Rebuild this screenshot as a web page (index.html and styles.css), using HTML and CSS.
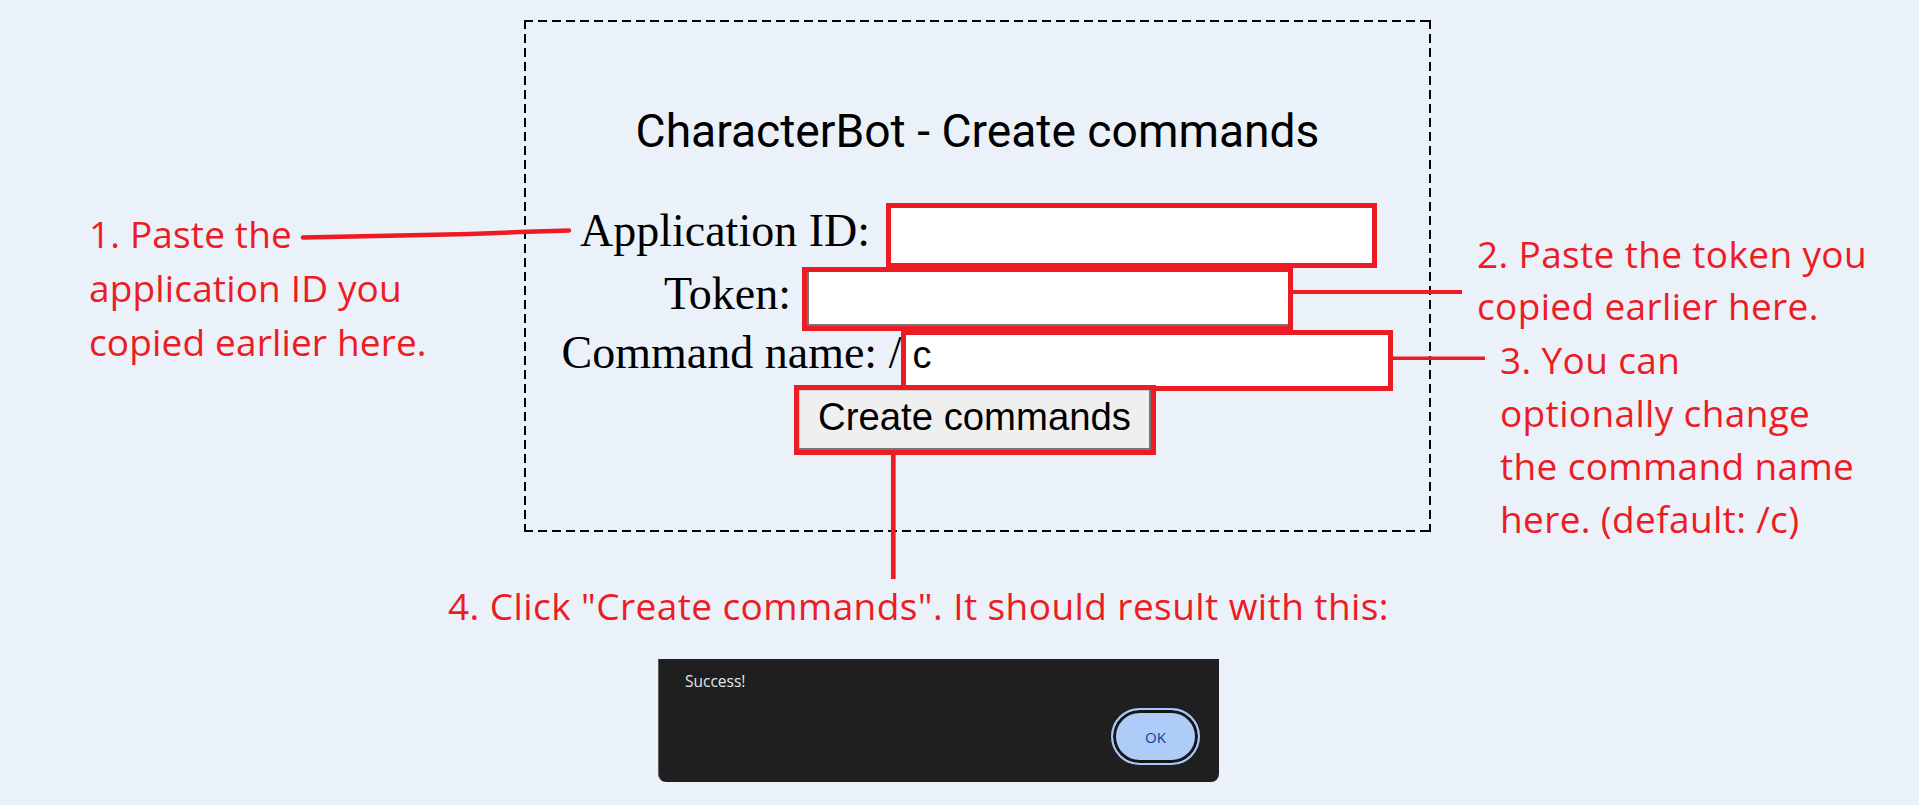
FILE: index.html
```html
<!DOCTYPE html>
<html lang="en">
<head>
<meta charset="utf-8">
<title>CharacterBot - Create commands</title>
<link rel="stylesheet" href="styles.css">
</head>
<body>
<div class="page">
  <div class="panel">
    <h1 class="title">CharacterBot - Create commands</h1>
    <div class="row row-app">
      <span class="label label-app">Application ID:</span>
      <input class="field field-app" type="text">
    </div>
    <div class="row row-token">
      <span class="label label-token">Token:</span>
      <input class="field field-token" type="text">
    </div>
    <div class="row row-cmd">
      <span class="label label-cmd">Command name: /</span>
      <input class="field field-cmd" type="text" value="c">
    </div>
    <div class="row row-btn">
      <button class="btn" type="button">Create commands</button>
    </div>
  </div>

  <div class="dialog">
    <p class="dialog-msg">Success!</p>
    <div class="dialog-actions">
      <button class="ok" type="button">OK</button>
    </div>
  </div>

  <p class="note note-1">1. Paste the<br>application ID you<br>copied earlier here.</p>
  <p class="note note-2">2. Paste the token you<br>copied earlier here.</p>
  <p class="note note-3">3. You can<br>optionally change<br>the command name<br>here. (default: /c)</p>
  <p class="note note-4">4. Click "Create commands". It should result with this:</p>

  <svg class="arrows" width="1919" height="805" viewBox="0 0 1919 805" aria-hidden="true">
    <polyline points="303,237.5 400,235.5 470,234 520,232 569,230.5" fill="none" stroke="#ED1C24" stroke-width="4.5" stroke-linecap="round"/>
    <line x1="1292" y1="292" x2="1462" y2="292" stroke="#ED1C24" stroke-width="4"/>
    <line x1="1390" y1="358.3" x2="1485" y2="358.3" stroke="#ED1C24" stroke-width="3.6"/>
    <line x1="893.3" y1="454" x2="893.3" y2="579" stroke="#ED1C24" stroke-width="4.7"/>
  </svg>
</div>
</body>
</html>
```
FILE: styles.css
```css
html, body {
  margin: 0;
  padding: 0;
}

body {
  background: #EAF1F8;
}

.page {
  position: relative;
  width: 1919px;
  height: 805px;
  padding-top: 20px;
  box-sizing: border-box;
  overflow: hidden;
}

.panel {
  margin-left: 524px;
  width: 907px;
  height: 512px;
  box-sizing: border-box;
  padding: 2px;
  background:
    repeating-linear-gradient(90deg, #000 0 9px, transparent 9px 14px) left top / 100% 2px no-repeat,
    repeating-linear-gradient(90deg, #000 0 9px, transparent 9px 14px) left bottom / 100% 2px no-repeat,
    repeating-linear-gradient(180deg, #000 0 9px, transparent 9px 14px) left top / 2px 100% no-repeat,
    repeating-linear-gradient(180deg, #000 0 9px, transparent 9px 14px) right top / 2px 100% no-repeat;
  display: flex;
  flex-direction: column;
  align-items: center;
}

.title {
  margin: 82px 0 0;
  font: 400 46.2px/54px Roboto, "Liberation Sans", sans-serif;
  color: #000;
}

.row {
  display: flex;
  justify-content: center;
  align-items: flex-start;
  width: 100%;
  box-sizing: border-box;
  padding-left: 2px;
}

.row-app {
  margin-top: 45px;
  height: 64px;
}

.row-token {
  height: 63px;
}

.row-cmd {
  height: 55px;
  padding-left: 0;
}

.row-btn {
  height: 70px;
  padding-left: 0;
}

.label {
  font: 46px/46px "Liberation Serif", "Times New Roman", serif;
  color: #000;
  white-space: nowrap;
}

.label-app {
  margin-top: 5px;
  margin-right: 16px;
}

.label-token {
  margin-top: 4px;
  margin-right: 11px;
}

.label-cmd {
  margin-top: 0;
  margin-right: 0;
}

.field {
  box-sizing: border-box;
  width: 491px;
  margin: 0;
  padding: 0 6px;
  border: 5px solid #ED1C24;
  border-radius: 0;
  background: #fff;
  font: 38px "Liberation Sans", Arial, sans-serif;
  color: #000;
  outline: none;
}

.field-app {
  height: 65px;
}

.field-token {
  height: 64px;
  box-shadow: inset 2px -2px 0 #767676;
}

.field-cmd {
  height: 61px;
  width: 492px;
  padding-bottom: 11px;
}

.btn {
  box-sizing: border-box;
  width: 362px;
  height: 70px;
  margin: 0 6px 0 0;
  padding: 0 0 6px;
  border: 5px solid #ED1C24;
  border-radius: 0;
  background: #EFEFEF;
  box-shadow: inset -2px -2px 0 #767676, inset 1px 1px 0 #cfcfcf;
  font: 38.3px "Liberation Sans", Arial, sans-serif;
  color: #000;
}

.dialog {
  margin: 127px 0 0 658px;
  width: 561px;
  height: 123px;
  box-sizing: border-box;
  padding: 12px 19px 17px 26px;
  background: #1F1F1F;
  border-left: 1px solid #5e5e5e;
  border-radius: 0 0 8px 8px;
  display: flex;
  flex-direction: column;
}

.dialog-msg {
  margin: 0;
  font: 15.5px/21px "Open Sans", "Noto Sans", sans-serif;
  color: #E6E6E6;
}

.dialog-actions {
  margin-top: auto;
  display: flex;
  justify-content: flex-end;
}

.ok {
  box-sizing: border-box;
  width: 89px;
  height: 57px;
  padding: 0;
  border: 2px solid #A8C7FA;
  border-radius: 29px;
  background: #AFCBF7;
  box-shadow: inset 0 0 0 3px #161616;
  font: 15px "Open Sans", "Noto Sans", sans-serif;
  color: #0842A0;
}

.note {
  position: absolute;
  margin: 0;
  font: 37px/54px "Open Sans", "Noto Sans", sans-serif;
  letter-spacing: 0.35px;
  color: #ED1C24;
  white-space: nowrap;
}

.note-1 {
  left: 89px;
  top: 207px;
  letter-spacing: 0.15px;
}

.note-2 {
  left: 1477px;
  top: 228px;
  line-height: 52px;
}

.note-3 {
  left: 1500px;
  top: 333px;
  line-height: 53px;
}

.note-4 {
  left: 448px;
  top: 579px;
  letter-spacing: 0.42px;
}

.arrows {
  position: absolute;
  left: 0;
  top: 0;
  pointer-events: none;
}
```
